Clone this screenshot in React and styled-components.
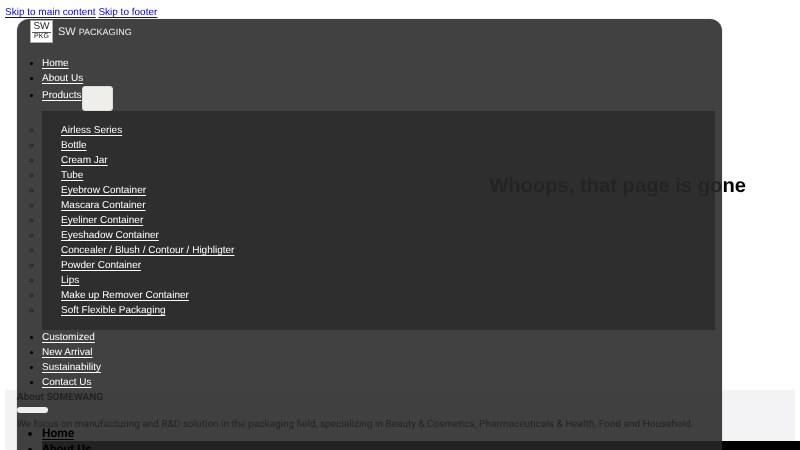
import styled, { createGlobalStyle } from "styled-components"

const Global = createGlobalStyle`
  html, body { margin: 0; padding: 0; background: #fff; }
  body {
    font-family: "Liberation Sans", Arial, sans-serif;
    font-size: 10px;
    overflow: hidden;
    text-rendering: geometricPrecision;
  }
  a { text-underline-offset: 2px; }
`

const Page = styled.div`
  position: relative;
  width: 800px;
  height: 450px;
  overflow: hidden;
  filter: blur(0.35px);
`

const SkipBar = styled.div`
  height: 19px;
  padding: 7px 5px 0;
  box-sizing: border-box;
  line-height: 12px;
  a { color: #00e; }
`

const Main = styled.main`
  height: 371px;
  display: flex;
  align-items: center;
  justify-content: flex-end;
  padding: 0 54px 37px 0;
  box-sizing: border-box;
`

const Title = styled.h1`
  margin: 0;
  font-size: 20.2px;
  font-weight: 700;
  color: #000;
`

const Footer = styled.footer`
  margin: 0 5px;
  height: 60px;
  padding: 0 12px;
  background: #f3f3f6;
  font-family: Roboto, sans-serif;
  color: #000;
`

const FooterTitle = styled.div`
  font-size: 10px;
  font-weight: 700;
  line-height: 14px;
  padding-top: 1px;
`

const Pill = styled.button`
  position: relative;
  z-index: 2;
  display: block;
  width: 31px;
  height: 6px;
  margin-top: 2px;
  padding: 0;
  border: none;
  border-radius: 3px;
  background: #f0eeeb;
`

const FooterText = styled.p`
  margin: 5px 0 0;
  font-size: 10px;
  line-height: 14px;
  white-space: nowrap;
`

const FooterList = styled.ul`
  position: relative;
  z-index: 2;
  margin: -7px 0 0;
  padding: 0 0 0 25px;
  font-size: 12px;
  font-weight: 700;
  line-height: 16px;
  a { color: #000; }
`

const BlackBar = styled.div`
  position: absolute;
  left: 42px;
  right: 0;
  top: 441px;
  height: 9px;
  background: #000;
`

const Overlay = styled.header`
  position: absolute;
  z-index: 1;
  left: 17px;
  top: 19px;
  width: 705px;
  height: 431px;
  background: rgba(39, 39, 39, 0.88);
  border-radius: 12px 12px 0 0;
  box-shadow: 0 0 1px rgba(0, 0, 0, 0.6);
  color: #fff;
`

const Brand = styled.div`
  display: flex;
  align-items: center;
  gap: 5px;
  height: 24px;
  padding-left: 13px;
`

const Logo = styled.div`
  width: 23px;
  height: 23px;
  padding-top: 1px;
  background: #fff;
  border: 1px solid #aaa;
  color: #222;
  font-size: 10px;
  line-height: 10px;
  text-align: center;
  box-sizing: border-box;
  small {
    display: block;
    margin: 0 1px;
    border-top: 1px solid #555;
    font-size: 7px;
    line-height: 8px;
  }
`

const BrandName = styled.span`
  padding-top: 1px;
  font-size: 11px;
  color: #eee;
  small { font-size: 9px; }
`

const NavList = styled.ul`
  margin: 0;
  padding: 13px 0 0 25px;
  list-style: disc;
  line-height: 15px;
  li::marker { color: #000; }
  a { color: #fff; }
`

const Toggle = styled.button`
  width: 31px;
  height: 25px;
  margin-left: 1px;
  padding: 0;
  border: 1px solid #ddd;
  border-radius: 3px;
  background: #f0eeeb;
  vertical-align: -12px;
`

const SubPanel = styled.ul`
  width: 673px;
  height: 219px;
  margin: 0;
  padding: 12px 0 0;
  box-sizing: border-box;
  background: rgba(36, 36, 36, 0.63);
  list-style: circle;
  line-height: 15px;
  li::marker { color: #1c1c1c; }
  a { margin-left: 19px; }
`

const SubPanelWrap = styled.li`
  list-style: none;
`

const products = [
  "Airless Series", "Bottle", "Cream Jar", "Tube", "Eyebrow Container", "Mascara Container",
  "Eyeliner Container", "Eyeshadow Container", "Concealer / Blush / Contour / Highligter",
  "Powder Container", "Lips", "Make up Remover Container", "Soft Flexible Packaging",
]

export default function App() {
  return (
    <Page>
      <Global />
      <SkipBar>
        <a href="#main">Skip to main content</a> <a href="#footer">Skip to footer</a>
      </SkipBar>
      <Main id="main">
        <Title>Whoops, that page is gone</Title>
      </Main>
      <Footer id="footer">
        <FooterTitle>About SOMEWANG</FooterTitle>
        <Pill />
        <FooterText>We focus on manufacturing and R&amp;D solution in the packaging field, specializing in Beauty &amp; Cosmetics, Pharmaceuticals &amp; Health, Food and Household.</FooterText>
        <FooterList>
          <li><a href="#home">Home</a></li>
          <li><a href="#about">About Us</a></li>
        </FooterList>
      </Footer>
      <BlackBar />
      <Overlay>
        <Brand>
          <Logo>SW<small>PKG</small></Logo>
          <BrandName>SW <small>PACKAGING</small></BrandName>
        </Brand>
        <NavList>
          <li><a href="#home">Home</a></li>
          <li><a href="#about">About Us</a></li>
          <li><a href="#products">Products</a><Toggle /></li>
          <SubPanelWrap>
            <SubPanel>
              {products.map((name) => (
                <li key={name}><a href="#product">{name}</a></li>
              ))}
            </SubPanel>
          </SubPanelWrap>
          <li><a href="#custom">Customized</a></li>
          <li><a href="#new">New Arrival</a></li>
          <li><a href="#sustain">Sustainability</a></li>
          <li><a href="#contact">Contact Us</a></li>
        </NavList>
      </Overlay>
    </Page>
  )
}
